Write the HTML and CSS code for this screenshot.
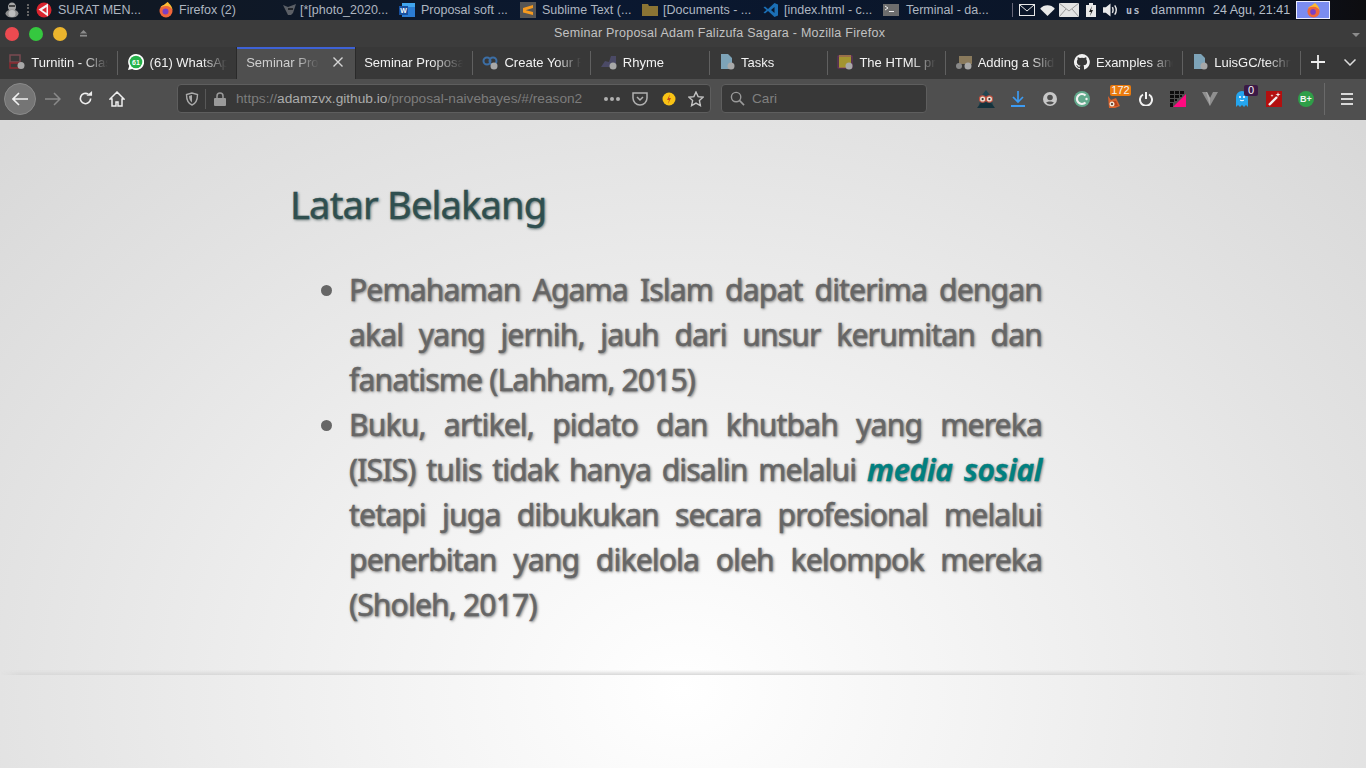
FILE: index.html
```html
<!DOCTYPE html>
<html lang="en">
<head>
    <meta charset="UTF-8">
    <title>Seminar Proposal Adam Falizufa Sagara - Mozilla Firefox</title>
    <link rel="stylesheet" href="styles.css">
</head>
<body>
    <div class="panel">
        <svg class="p-ico tux" viewBox="0 0 16 16"><ellipse cx="8" cy="5" rx="4" ry="4.500" fill="#a8a8a8"/><rect x="5" y="3" width="6" height="2" fill="#444"/><ellipse cx="8" cy="11.500" rx="6.500" ry="4" fill="#8f8f8f"/><ellipse cx="8" cy="11.500" rx="3.500" ry="3.500" fill="#bdbdbd"/></svg>
        <span class="p-dots"></span>
        <div class="task t-surat"><svg class="p-ico" viewBox="0 0 16 16"><circle cx="8" cy="8" r="7.500" fill="#d9242e"/><path d="M12 1.500 2.500 7.500l9.500 7z" fill="#f4f4f4"/><path d="M10.500 5 6 8l4.500 3z" fill="#d9242e"/></svg><span>SURAT MEN...</span></div>
        <div class="task t-firefox"><svg class="p-ico" viewBox="0 0 16 16"><circle cx="8" cy="9" r="6.500" fill="#f0663a"/><circle cx="7.500" cy="9.500" r="3" fill="#7a3fc4"/><path d="M2 6c1-2 3-3 4-3 1-1 3-3 4-3 0 1 4 3 4.500 8-1-2-3-4-6.500-4C5 4 3 5 2 6z" fill="#fdbb33"/></svg><span>Firefox (2)</span></div>
        <div class="task t-photo"><svg class="p-ico" viewBox="0 0 16 16"><path d="M1 3l5 2 8-3-3 9-2 2H6L4 9z" fill="#5b5f66"/><rect x="6" y="6" width="5" height="2" fill="#23262b"/></svg><span>[*[photo_2020...</span></div>
        <div class="task t-prop"><svg class="p-ico" viewBox="0 0 16 16"><rect x="3" y="1" width="13" height="14" fill="#2b7cd3"/><rect x="3" y="1" width="13" height="4" fill="#41a5ee"/><rect x="0" y="4" width="9" height="9" fill="#174f9e"/><text x="1.200" y="11" class="p-w">W</text></svg><span>Proposal soft ...</span></div>
        <div class="task t-subl"><svg class="p-ico" viewBox="0 0 16 16"><rect width="16" height="16" fill="#555"/><path d="M3 6l10-3v3L3 9zm0 1.500 10 2.500v3L3 10.500z" fill="#f59a1f"/></svg><span>Sublime Text (...</span></div>
        <div class="task t-docs"><svg class="p-ico" viewBox="0 0 16 16"><path d="M0 2h6l1 2h9v10H0z" fill="#8a7434"/></svg><span>[Documents - ...</span></div>
        <div class="task t-code"><svg class="p-ico" viewBox="0 0 16 16"><path d="M11.500 1 15 2.500v11L11.500 15 5 9l-3 2.500L.5 10.500 3.500 8 .5 5.500 2 4.500 5 7zm0 4L8 8l3.500 3z" fill="#1b6fb5"/></svg><span>[index.html - c...</span></div>
        <div class="task t-term"><svg class="p-ico" viewBox="0 0 16 16"><rect y="2" width="16" height="12" fill="#6d6d6d"/><path d="M2 4l3 2-3 2" fill="none" stroke="#eee"/><rect x="6" y="9" width="5" height="1" fill="#eee"/></svg><span>Terminal - da...</span></div>
        <span class="p-sep"></span>
        <div class="tray">
            <svg class="tray-mail" viewBox="0 0 16 12"><rect x=".5" y=".5" width="15" height="11" fill="none" stroke="#e8e8e8"/><path d="M1 1l7 6 7-6" fill="none" stroke="#e8e8e8"/></svg>
            <svg class="tray-wifi" viewBox="0 0 16 12"><path d="M0 4c4-5 12-5 16 0l-8 8z" fill="#e8e8e8"/></svg>
            <svg class="tray-env" viewBox="0 0 20 14"><rect width="20" height="14" fill="#e4e4e4"/><path d="M0 0l10 8 10-8M0 14l7-8M20 14l-7-8" fill="none" stroke="#999"/></svg>
            <svg class="tray-bat" viewBox="0 0 10 14"><rect y="2" width="10" height="12" fill="#e8e8e8"/><rect x="3" width="4" height="2" fill="#e8e8e8"/><path d="M6 3 3 9h2l-1 4 3-6H5z" fill="#222"/></svg>
            <svg class="tray-vol" viewBox="0 0 16 14"><path d="M0 4h3l5-4v14l-5-4H0z" fill="#e8e8e8"/><path d="M10 4c1 2 1 4 0 6M12.500 2c2 3 2 7 0 10" fill="none" stroke="#e8e8e8" stroke-width="1.500"/></svg>
            <span class="tray-kb">us</span>
            <span class="tray-user">dammmn</span>
            <span class="tray-clock">24 Agu, 21:41</span>
            <div class="tray-ff"><svg viewBox="0 0 16 16"><circle cx="8" cy="9" r="6.500" fill="#f0663a"/><circle cx="7.500" cy="9.500" r="3" fill="#7a3fc4"/><path d="M2 6c1-2 3-3 4-3 1-1 3-3 4-3 0 1 4 3 4.500 8-1-2-3-4-6.500-4C5 4 3 5 2 6z" fill="#fdbb33"/></svg></div>
        </div>
    </div>

    <div class="titlebar">
        <span class="dot dot-red"></span>
        <span class="dot dot-green"></span>
        <span class="dot dot-yellow"></span>
        <svg class="eject" viewBox="0 0 10 8"><path d="M5 0l4 4H1z" fill="#8c8c8c"/><rect x="1" y="5.500" width="8" height="2" fill="#8c8c8c"/></svg>
        <span class="win-title">Seminar Proposal Adam Falizufa Sagara - Mozilla Firefox</span>
        <svg class="win-menu" viewBox="0 0 8 4"><path d="M0 0h8L4 4z" fill="#8c8c8c"/></svg>
    </div>

    <div class="tabbar">
        <div class="tab"><svg class="fav" viewBox="0 0 16 16"><rect x="1" y="1" width="10" height="7" fill="none" stroke="#7a4a50" stroke-width="1.500"/><rect x="1" y="9" width="9" height="5" fill="none" stroke="#8d2a30" stroke-width="1.500"/><circle cx="12" cy="11.500" r="3.500" fill="#a8a8a8"/></svg><span class="tab-text">Turnitin - Class</span></div>
        <div class="tab"><svg class="fav" viewBox="0 0 16 16"><path d="M8 0a8 8 0 1 1-3.800 15L0 16l1.200-4A8 8 0 0 1 8 0z" fill="#fff"/><circle cx="8" cy="8" r="6.300" fill="#25b24a"/><text x="8" y="10.500" class="fav-num">61</text></svg><span class="tab-text">(61) WhatsApp</span></div>
        <div class="tab tab-active"><span class="tab-text">Seminar Proposal</span><svg class="tab-x" viewBox="0 0 10 10"><path d="M.5.500l9 9M9.500.500l-9 9" stroke="#d5d5d5" stroke-width="1.400"/></svg></div>
        <div class="tab tab-plain"><span class="tab-text">Seminar Proposal</span></div>
        <div class="tab"><svg class="fav" viewBox="0 0 16 16"><circle cx="5" cy="7" r="3.500" fill="none" stroke="#3c6ea5" stroke-width="2"/><circle cx="11" cy="7" r="3.500" fill="none" stroke="#3c6ea5" stroke-width="2"/><circle cx="12" cy="12" r="3.500" fill="#a8a8a8"/></svg><span class="tab-text">Create Your Free</span></div>
        <div class="tab"><svg class="fav" viewBox="0 0 16 16"><path d="M0 13l4-6 4 1 2-6h5v11z" fill="#4b4a66"/><circle cx="12" cy="12" r="3.500" fill="#a8a8a8"/></svg><span class="tab-text">Rhyme</span></div>
        <div class="tab"><svg class="fav" viewBox="0 0 16 16"><path d="M2 0h7l4 4v11H2z" fill="#7da3b8"/><circle cx="12" cy="12" r="3.500" fill="#a8a8a8"/></svg><span class="tab-text">Tasks</span></div>
        <div class="tab"><svg class="fav" viewBox="0 0 16 16"><rect x="2" y="1" width="12" height="13" fill="#a39430"/><rect x="1" y="2" width="14" height="12" fill="none" stroke="#8a2f7a" stroke-width=".7"/><circle cx="12" cy="12" r="3.500" fill="#a8a8a8"/></svg><span class="tab-text">The HTML pre</span></div>
        <div class="tab"><svg class="fav" viewBox="0 0 16 16"><rect x="3" y="2" width="13" height="8" fill="#8a7a5c"/><circle cx="3" cy="12" r="3" fill="#888"/><circle cx="12" cy="12" r="3.500" fill="#a8a8a8"/></svg><span class="tab-text">Adding a Slide</span></div>
        <div class="tab"><svg class="fav" viewBox="0 0 16 16"><path d="M8 0a8 8 0 0 0-2.500 15.600c.4.100.5-.2.500-.4v-1.400c-2.200.5-2.700-1-2.700-1-.4-.9-.9-1.200-.9-1.200-.7-.5.100-.5.100-.5.800.1 1.200.8 1.200.8.700 1.200 1.900.9 2.300.7.100-.5.300-.9.500-1.100-1.800-.2-3.600-.9-3.600-4 0-.9.300-1.600.8-2.100-.1-.2-.4-1 .1-2.100 0 0 .7-.2 2.200.8a7.600 7.600 0 0 1 4 0c1.500-1 2.200-.8 2.200-.8.400 1.100.2 1.900.1 2.100.5.600.8 1.300.8 2.100 0 3.100-1.900 3.700-3.700 3.900.3.300.6.800.6 1.500v2.200c0 .2.100.5.600.4A8 8 0 0 0 8 0z" fill="#f2f2f2"/></svg><span class="tab-text">Examples and</span></div>
        <div class="tab"><svg class="fav" viewBox="0 0 16 16"><path d="M2 0h7l4 4v11H2z" fill="#7da3b8"/><circle cx="12" cy="12" r="3.500" fill="#a8a8a8"/></svg><span class="tab-text">LuisGC/technic</span></div>
        <svg class="tab-plus" viewBox="0 0 14 14"><path d="M7 0v14M0 7h14" stroke="#eee" stroke-width="1.800"/></svg>
        <svg class="tab-more" viewBox="0 0 12 7"><path d="M.5.500 6 6 11.500.500" fill="none" stroke="#ddd" stroke-width="1.500"/></svg>
    </div>

    <div class="toolbar">
        <div class="back"><svg viewBox="0 0 16 14"><path d="M7 1 1 7l6 6M1 7h15" fill="none" stroke="#f0f0f0" stroke-width="1.600"/></svg></div>
        <svg class="forward" viewBox="0 0 16 14"><path d="M9 1l6 6-6 6M15 7H0" fill="none" stroke="#8a8a8a" stroke-width="1.500"/></svg>
        <svg class="reload" viewBox="0 0 16 16"><path d="M13.500 8A5.500 5.500 0 1 1 11 3.400" fill="none" stroke="#eee" stroke-width="1.700"/><path d="M9 5h6V0z" fill="#eee"/></svg>
        <svg class="home" viewBox="0 0 16 16"><path d="M8 1 1 8h2v7h4v-4h2v4h4V8h2z" fill="none" stroke="#eee" stroke-width="1.500"/></svg>
        <div class="urlbar">
            <svg class="u-shield" viewBox="0 0 14 14"><path d="M7 1 1.500 2.500C1.500 8 3 11.500 7 13c4-1.500 5.500-5 5.500-10.500z" fill="none" stroke="#aaa" stroke-width="1.400"/><path d="M7 3 4 4c0 3 1 5 3 6.500z" fill="#aaa"/></svg>
            <span class="u-sep"></span>
            <svg class="u-lock" viewBox="0 0 12 14"><path d="M3 6V4a3 3 0 0 1 6 0v2" fill="none" stroke="#9a9a9a" stroke-width="1.500"/><rect y="6" width="12" height="8" rx="1" fill="#9a9a9a"/></svg>
            <span class="u-text">https://<b>adamzvx.github.io</b>/proposal-naivebayes/#/reason2</span>
            <span class="u-more"><i></i><i></i><i></i></span>
            <svg class="u-pocket" viewBox="0 0 16 14"><path d="M1 1h14v5a7 7 0 0 1-14 0z" fill="none" stroke="#b0b0b0" stroke-width="1.500"/><path d="M5 5l3 3 3-3" fill="none" stroke="#b0b0b0" stroke-width="1.500"/></svg>
            <svg class="u-bolt" viewBox="0 0 14 14"><circle cx="7" cy="7" r="6.500" fill="#f9c315"/><path d="M8 2 5 8h2l-1 4 3-6H7z" fill="#c2491b"/></svg>
            <svg class="u-star" viewBox="0 0 16 16"><path d="M8 1l2.100 4.600 5 .6-3.700 3.400 1 5L8 12.100 3.600 14.600l1-5L.9 6.200l5-.6z" fill="none" stroke="#c4c4c4" stroke-width="1.400"/></svg>
        </div>
        <div class="search">
            <svg viewBox="0 0 16 16"><circle cx="6.500" cy="6.500" r="5" fill="none" stroke="#9a9a9a" stroke-width="1.500"/><path d="M10 10l5 5" stroke="#9a9a9a" stroke-width="1.700"/></svg>
            <span>Cari</span>
        </div>
        <div class="exts">
            <div class="ext"><svg class="i18" viewBox="0 0 16 16"><path d="M8 0l4 5 3 11H1L4 5z" fill="#1f4652"/><path d="M0 16l4-5h8l4 5z" fill="#15323c"/><circle cx="5" cy="8" r="2.800" fill="#eadfd2" stroke="#c0503f"/><circle cx="11" cy="8" r="2.800" fill="#eadfd2" stroke="#c0503f"/><circle cx="5" cy="8" r="1" fill="#333"/><circle cx="11" cy="8" r="1" fill="#333"/></svg></div>
            <div class="ext"><svg class="i16" viewBox="0 0 14 16"><path d="M7 0v11M2 6l5 5 5-5" fill="none" stroke="#3d9bf2" stroke-width="1.700"/><rect y="14" width="14" height="2" fill="#3d9bf2"/></svg></div>
            <div class="ext"><svg class="i14" viewBox="0 0 14 14"><circle cx="7" cy="7" r="7" fill="#c8c8c8"/><circle cx="7" cy="5.500" r="2.800" fill="#4f4f4f"/><path d="M3 10.500c2-1.500 6-1.500 8 0a5 5 0 0 1-8 0z" fill="#4f4f4f"/></svg></div>
            <div class="ext"><svg class="i16" viewBox="0 0 16 16"><circle cx="8" cy="8" r="8" fill="#62a98c"/><path d="M11.500 4.500a5 5 0 1 0 0 7" fill="none" stroke="#f2f2f2" stroke-width="2.200"/><circle cx="12.500" cy="8" r="1.200" fill="#f2f2f2"/></svg></div>
            <div class="ext"><svg class="i14 fox" viewBox="0 0 14 14"><path d="M1 2l3 4 5-2 4 8-5 2H2z" fill="#d9622b"/><path d="M6 7l3 0 2 5H7z" fill="#b8431a"/><circle cx="5" cy="10" r="2.500" fill="#f0e2d2"/><circle cx="5" cy="10" r="1" fill="#402010"/></svg><span class="badge badge-o">172</span></div>
            <div class="ext"><svg class="i14" viewBox="0 0 14 14"><path d="M4 2.500a6 6 0 1 0 6 0M7 0v7" fill="none" stroke="#f2f2f2" stroke-width="2"/></svg></div>
            <div class="ext"><svg class="i16" viewBox="0 0 16 16"><path d="M16 3v13H3z" fill="#ff0a80"/><path d="M0 0h4v3H0zM5 0h4v3H5zM10 0h4v3h-4zM0 4h4v3H0zM5 4h4v3H5zM10 4h2v2h-2zM0 8h4v3H0zM5 8h2v2H5zM0 12h3v4H0z" fill="#0c0c0c"/></svg></div>
            <div class="ext"><svg class="i16" viewBox="0 0 16 14"><path d="M0 0h5l3 6 3-6h5L8 14z" fill="#8f8f8f"/><path d="M4 0h1l3 6v8z" fill="#a8a8a8"/></svg></div>
            <div class="ext"><svg class="ghost" viewBox="0 0 12 16"><path d="M0 16V6a6 6 0 0 1 12 0v10l-2-2-2 2-2-2-2 2-2-2z" fill="#25a5ee"/><circle cx="4" cy="6" r="1" fill="#fff"/><circle cx="8" cy="6" r="1" fill="#fff"/><path d="M4 9c1 1 3 1 4 0" stroke="#fff" fill="none"/></svg><span class="badge badge-p">0</span></div>
            <div class="ext"><svg class="i16" viewBox="0 0 16 16"><rect width="16" height="16" fill="#b30f0f"/><path d="M3 14 11 6" stroke="#f2f2f2" stroke-width="2.400"/><path d="M12 1l.6 2 2 .6-2 .6-.6 2-.6-2-2-.6 2-.6zM6 3l.4 1.200 1.200.4-1.200.4L6 6.200l-.4-1.200-1.200-.4 1.200-.4z" fill="#f2f2f2"/></svg></div>
            <div class="ext"><span class="bplus">B+</span></div>
        </div>
        <span class="tb-sep"></span>
        <svg class="burger" viewBox="0 0 12 12"><path d="M0 1h12M0 6h12M0 11h12" stroke="#d8d8d8" stroke-width="2"/></svg>
    </div>

    <main class="slide-area">
        <div class="slide">
            <h2>Latar Belakang</h2>
            <ul>
                <li>Pemahaman Agama Islam dapat diterima dengan akal yang jernih, jauh dari unsur kerumitan dan fanatisme (Lahham, 2015)</li>
                <li>Buku, artikel, pidato dan khutbah yang mereka (ISIS) tulis tidak hanya disalin melalui <em>media sosial</em> tetapi juga dibukukan secara profesional melalui penerbitan yang dikelola oleh kelompok mereka (Sholeh, 2017)</li>
            </ul>
        </div>
        <div class="floor"></div>
    </main>
</body>
</html>
```

FILE: styles.css
```css
* {
    box-sizing: border-box;
}
html, body {
    margin: 0;
    height: 100%;
    overflow: hidden;
}
body {
    width: 1366px;
    height: 768px;
    display: flex;
    flex-direction: column;
    font-family: "Liberation Sans", Arial, sans-serif;
    background: #3c3c3c;
}

/* desktop panel */
.panel {
    height: 20px;
    flex: none;
    display: flex;
    align-items: center;
    color: #aeb6c0;
    font-size: 12.5px;
    background: linear-gradient(90deg, #121820, #0a1830 45%, #0b1526 88%, #0d0d10);
    white-space: nowrap;
}
.p-ico {
    width: 16px;
    height: 16px;
    flex: none;
}
.p-w {
    font: bold 7px "Liberation Sans", sans-serif;
    fill: #fff;
}
.tux {
    margin-left: 4px;
}
.p-dots {
    width: 2px;
    height: 12px;
    margin: 0 7px;
    border-left: 2px dotted #666;
}
.task {
    display: flex;
    align-items: center;
    gap: 6px;
    flex: none;
}
.t-surat { width: 122px; }
.t-firefox { width: 124px; gap: 5px; }
.t-photo { width: 117px; gap: 2px; }
.t-prop { width: 121px; }
.t-subl { width: 122px; }
.t-docs { width: 121px; gap: 5px; }
.t-code { width: 120px; gap: 5px; }
.t-term { width: 129px; gap: 7px; }
.p-sep {
    width: 1px;
    height: 14px;
    background: #667;
    margin-right: 6px;
    flex: none;
}
.tray {
    display: flex;
    align-items: center;
    flex: 1;
    color: #b4bdc8;
}
.tray-mail { width: 16px; height: 12px; margin-right: 5px; }
.tray-wifi { width: 15px; height: 11px; margin-right: 4px; }
.tray-env { width: 20px; height: 14px; margin-right: 7px; }
.tray-bat { width: 10px; height: 14px; margin-right: 7px; }
.tray-vol { width: 15px; height: 14px; margin-right: 8px; }
.tray-kb {
    width: 25px;
    font: bold 10px "DejaVu Sans Mono", monospace;
    letter-spacing: 1.5px;
}
.tray-user {
    width: 62px;
    letter-spacing: .3px;
}
.tray-clock { width: 83px; }
.tray-ff {
    width: 34px;
    height: 18px;
    background: #7b8cf0;
    border: 1px solid #eef;
    display: flex;
    justify-content: center;
    align-items: center;
}
.tray-ff svg {
    width: 15px;
    height: 15px;
}

/* window title */
.titlebar {
    height: 27px;
    flex: none;
    display: flex;
    align-items: center;
    position: relative;
    background: #3c3c3c;
    padding-left: 5px;
    gap: 10px;
}
.dot {
    width: 14px;
    height: 14px;
    border-radius: 50%;
}
.dot-red { background: #ec4a50; }
.dot-green { background: #35c83f; }
.dot-yellow { background: #ecb52d; }
.eject {
    width: 9px;
    height: 7px;
    margin-left: 2px;
}
.win-title {
    position: absolute;
    left: 554px;
    top: 6px;
    font-size: 12.5px;
    color: #c2c2c2;
    letter-spacing: .25px;
}
.win-menu {
    position: absolute;
    right: 6px;
    top: 13px;
    width: 8px;
    height: 4px;
}

/* tabs */
.tabbar {
    height: 32px;
    flex: none;
    display: flex;
    align-items: stretch;
    background: #383838;
    color: #f2f2f2;
    font-size: 13px;
}
.tab {
    width: 118.3px;
    flex: none;
    display: flex;
    align-items: center;
    padding: 0 0 2px 9.3px;
    gap: 6px;
    position: relative;
}
.tab::after {
    content: "";
    position: absolute;
    right: 0;
    top: 4px;
    height: 24px;
    width: 1px;
    background: #606060;
}
.tab-active {
    background: #4f4f4f;
    border-top: 2px solid #3e62d6;
    color: #cfcfcf;
    box-shadow: -1px 0 0 #2a2a2a, 1px 0 0 #2a2a2a;
    justify-content: space-between;
    padding: 0 12px 4px 9.6px;
}
.tab-active::after {
    display: none;
}
.fav {
    width: 16px;
    height: 16px;
    flex: none;
}
.fav-num {
    font: bold 7px "Liberation Sans", sans-serif;
    fill: #fff;
    text-anchor: middle;
}
.tab-text {
    display: block;
    flex: 1;
    min-width: 0;
    overflow: hidden;
    white-space: nowrap;
    -webkit-mask-image: linear-gradient(90deg, #000 68%, transparent 100%);
    mask-image: linear-gradient(90deg, #000 68%, transparent 100%);
    margin-right: 10px;
}
.tab-active .tab-text {
    margin-right: 8px;
}
.tab-x {
    width: 10px;
    height: 10px;
    flex: none;
}
.tab-plus {
    width: 14px;
    height: 14px;
    align-self: center;
    margin: 0 0 2px 10px;
}
.tab-more {
    width: 12px;
    height: 7px;
    align-self: center;
    margin: 0 0 2px 19px;
}

/* nav bar */
.toolbar {
    height: 41px;
    flex: none;
    display: flex;
    align-items: center;
    background: #4f4f4f;
    padding: 0 0 2px 4px;
}
.back {
    width: 32px;
    height: 32px;
    border-radius: 50%;
    background: #757575;
    border: 1px solid #8a8a8a;
    display: flex;
    align-items: center;
    justify-content: center;
    flex: none;
}
.back svg {
    width: 16px;
    height: 14px;
}
.forward {
    width: 16px;
    height: 14px;
    margin-left: 9px;
    flex: none;
}
.reload {
    width: 15px;
    height: 15px;
    margin-left: 17px;
    flex: none;
}
.home {
    width: 16px;
    height: 16px;
    margin-left: 16px;
    flex: none;
}
.urlbar {
    width: 534px;
    height: 29px;
    margin-left: 52px;
    flex: none;
    display: flex;
    align-items: center;
    background: #383838;
    border: 1px solid #5e5e5e;
    border-radius: 4px;
}
.u-shield { width: 14px; height: 14px; margin-left: 7px; flex: none; }
.u-sep { width: 1px; height: 20px; background: #585858; margin-left: 6px; flex: none; }
.u-lock { width: 12px; height: 14px; margin-left: 8px; flex: none; }
.u-text {
    margin-left: 10px;
    width: 368px;
    flex: none;
    font-size: 13.7px;
    color: #7c7c7c;
    white-space: nowrap;
    overflow: hidden;
}
.u-text b {
    font-weight: normal;
    color: #ababab;
}
.u-more {
    display: flex;
    gap: 2px;
    flex: none;
}
.u-more i {
    width: 4px;
    height: 4px;
    border-radius: 50%;
    background: #b0b0b0;
}
.u-pocket { width: 16px; height: 14px; margin-left: 12px; flex: none; }
.u-bolt { width: 14px; height: 14px; margin-left: 14px; flex: none; }
.u-star { width: 16px; height: 16px; margin-left: 12px; flex: none; }
.search {
    width: 206px;
    height: 29px;
    margin-left: 10px;
    flex: none;
    display: flex;
    align-items: center;
    background: #383838;
    border: 1px solid #5e5e5e;
    border-radius: 4px;
    padding-left: 8px;
    gap: 7px;
    font-size: 13.6px;
    color: #808080;
}
.search svg {
    width: 15px;
    height: 15px;
}
.exts {
    display: flex;
    margin-left: 43px;
    flex: none;
}
.ext {
    width: 32px;
    height: 32px;
    display: flex;
    align-items: center;
    justify-content: center;
    position: relative;
}
.i18 { width: 18px; height: 18px; }
.i16 { width: 16px; height: 16px; }
.i14 { width: 14px; height: 14px; }
.ghost { width: 12px; height: 16px; }
.fox { margin-top: 4px; }
.badge {
    position: absolute;
    top: 2px;
    height: 11px;
    font-size: 11px;
    line-height: 11px;
    text-align: center;
    color: #f5f5f5;
    border-radius: 2px;
}
.badge-o {
    background: #ea7a0e;
    left: 12px;
    width: 21px;
}
.badge-p {
    background: #3c1a46;
    left: 18px;
    width: 14px;
}
.bplus {
    width: 16px;
    height: 16px;
    border-radius: 50%;
    background: #2e9e48;
    color: #f4f4f4;
    font-size: 9px;
    font-weight: bold;
    line-height: 16px;
    text-align: center;
}
.tb-sep {
    width: 1px;
    height: 32px;
    background: #6a6a6a;
    margin-left: 2px;
    flex: none;
}
.burger {
    width: 12px;
    height: 12px;
    margin-left: 16px;
    flex: none;
}

/* slide */
.slide-area {
    flex: 1;
    position: relative;
    background: radial-gradient(ellipse 963px 792px at 50% 88%, #fff 0%, #f4f4f4 29%, #e3e3e3 71%, #d8d8d8 100%);
    overflow: hidden;
}
.slide {
    width: 760px;
    margin-left: 290px;
    padding-top: 58px;
    font-family: "Noto Sans", "Open Sans", sans-serif;
}
.slide h2 {
    margin: 0;
    font-size: 38px;
    line-height: 53px;
    font-weight: 400;
    letter-spacing: -.8px;
    color: #2f4f4f;
    -webkit-text-stroke: .4px #2f4f4f;
    text-shadow: 1px 1px 3px #5a6a6a;
}
.slide ul {
    margin: 36px 0 0;
    padding: 0 0 0 59px;
    width: 752px;
    list-style: disc;
    font-size: 30px;
    line-height: 45px;
    font-weight: 400;
    letter-spacing: -.8px;
    color: #666;
    -webkit-text-stroke: .5px #666;
    text-align: justify;
    text-shadow: 1px 1px 3px #666;
}
.slide em {
    color: #008080;
    -webkit-text-stroke: .5px #008080;
    font-weight: 600;
    letter-spacing: -.2px;
}
.floor {
    position: absolute;
    left: 0;
    right: 0;
    top: 550px;
    height: 5px;
    background: linear-gradient(180deg, transparent, #d8d8d8);
    -webkit-mask-image: linear-gradient(90deg, transparent, #000 1.5%, #000 98.5%, transparent);
    mask-image: linear-gradient(90deg, transparent, #000 1.5%, #000 98.5%, transparent);
}
```
